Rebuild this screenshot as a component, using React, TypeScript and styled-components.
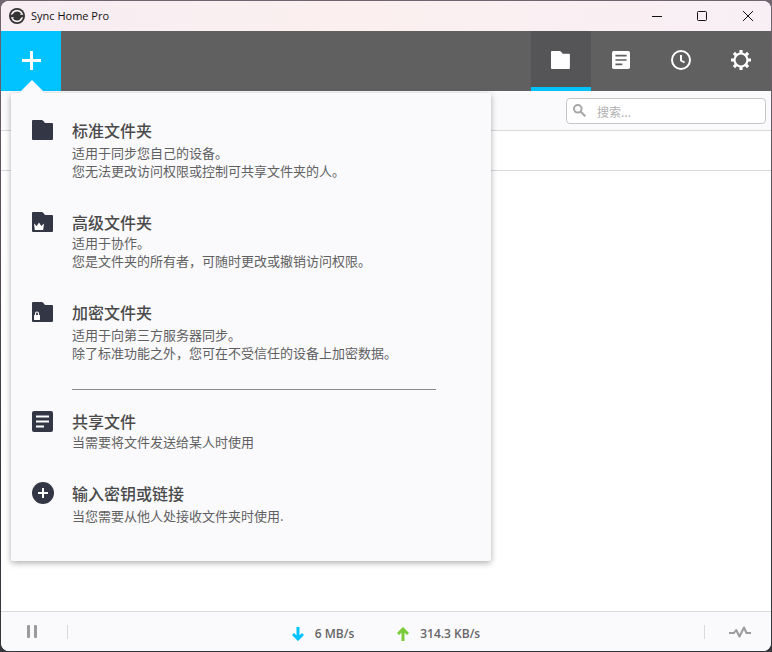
import React from "react";
import styled, { createGlobalStyle } from "styled-components";

const latin = '"Open Sans", "Noto Sans", sans-serif';
const chinese = '"Noto Sans CJK SC", "Open Sans", sans-serif';

const color = {
  accent: "#00c3ff",
  bar: "#606060",
  barActive: "#555558",
  surface: "#fafafd",
  line: "#d9d9dc",
  ink: "#333745",
  title: "#4a4a4a",
  text: "#606060",
  muted: "#9b9b9b",
  up: "#7ccb3a",
};

const GlobalStyle = createGlobalStyle`
  * { box-sizing: border-box; }
  body {
    margin: 0;
    background: linear-gradient(180deg, #716670 0%, #554b54 40%, #38393f 70%, #35363c 100%);
  }
  button {
    margin: 0;
    padding: 0;
    border: 0;
    background: none;
    font: inherit;
    color: inherit;
  }
  svg { display: block; }
`;

const Desktop = styled.div`
  display: flex;
  height: 100vh;
  padding: 1px;
`;

const Window = styled.div`
  position: relative;
  flex: 1;
  display: flex;
  flex-direction: column;
  overflow: hidden;
  border-radius: 8px;
  background: #fff;
  font-family: ${latin};
`;

const TitleBar = styled.header`
  flex: none;
  display: flex;
  align-items: center;
  height: 30px;
  padding-left: 8px;
  background: linear-gradient(90deg, #f7edf3, #fbefef 45%, #f8eff5);
`;

const AppName = styled.h1`
  flex: 1;
  margin: 0;
  padding-left: 6px;
  font-size: 11px;
  font-weight: 400;
  line-height: 16px;
  color: #111;
`;

const CaptionButton = styled.button`
  display: grid;
  place-items: center;
  width: 46px;
  height: 30px;
`;

const Toolbar = styled.nav`
  flex: none;
  display: flex;
  height: 60px;
  background: ${color.bar};
  color: #fff;
`;

const AddButton = styled.button`
  display: grid;
  place-items: center;
  width: 60px;
  margin-right: auto;
  background: ${color.accent};
`;

const TabButton = styled.button<{ $active?: boolean }>`
  display: grid;
  place-items: center;
  width: 60px;
  padding-bottom: 2px;
  background: ${(p) => (p.$active ? color.barActive : "transparent")};
  box-shadow: ${(p) => (p.$active ? `inset 0 -4px ${color.accent}` : "none")};
`;

const SearchBand = styled.div`
  flex: none;
  display: flex;
  justify-content: flex-end;
  align-items: center;
  height: 40px;
  padding-right: 5px;
  border-bottom: 1px solid ${color.line};
  background: ${color.surface};
`;

const SearchField = styled.label`
  display: flex;
  align-items: center;
  gap: 11px;
  width: 200px;
  height: 26px;
  padding-left: 6px;
  border: 1px solid #c6c6c9;
  border-radius: 4px;
  background: #fff;
`;

const SearchInput = styled.input`
  flex: 1;
  min-width: 0;
  padding: 2px 0 0;
  border: 0;
  outline: 0;
  background: none;
  font-family: ${chinese};
  font-size: 12px;
  line-height: 20px;
  &::placeholder { color: #b0b0b0; opacity: 1; }
`;

const ListHeader = styled.div`
  flex: none;
  height: 40px;
  border-bottom: 1px solid ${color.line};
`;

const FolderList = styled.main`
  flex: 1;
`;

const StatusBar = styled.footer`
  flex: none;
  display: flex;
  align-items: center;
  justify-content: space-between;
  height: 40px;
  border-top: 1px solid ${color.line};
  background: ${color.surface};
`;

const StatusButton = styled.button<{ $side: "left" | "right" }>`
  display: grid;
  place-items: center;
  width: 67px;
  height: 14px;
  color: ${color.muted};
  ${(p) =>
    p.$side === "left"
      ? `border-right: 1px solid ${color.line}; padding-right: 4px;`
      : `border-left: 1px solid ${color.line}; padding-left: 4px;`}
`;

const Speeds = styled.div`
  display: flex;
  gap: 43px;
  padding-top: 4px;
`;

const Speed = styled.span`
  display: flex;
  align-items: center;
  gap: 11px;
  font-size: 12px;
  font-weight: 600;
  line-height: 16px;
  color: #666;
`;

const AddMenu = styled.section`
  position: absolute;
  top: 92px;
  left: 10px;
  width: 480px;
  padding: 25px 55px 36px 21px;
  border-radius: 2px;
  background: ${color.surface};
  box-shadow: 0 2px 6px rgba(0, 0, 0, 0.32);
`;

const Pointer = styled.svg`
  position: absolute;
  top: -13px;
  left: 9px;
`;

const MenuItem = styled.button`
  display: grid;
  grid-template-columns: 40px 1fr;
  width: 100%;
  margin-bottom: 30px;
  font-family: ${chinese};
  text-align: left;
  &:last-child { margin-bottom: 0; }
`;

const ItemIcon = styled.span`
  display: flex;
  align-items: center;
  height: 24px;
  color: ${color.ink};
`;

const ItemText = styled.span<{ $loose?: boolean }>`
  display: flex;
  flex-direction: column;
  gap: ${(p) => (p.$loose ? 2 : 0)}px;
`;

const ItemTitle = styled.strong`
  font-size: 16px;
  font-weight: 500;
  line-height: 24px;
  color: ${color.title};
`;

const ItemNote = styled.span`
  font-size: 13px;
  line-height: 18px;
  color: ${color.text};
  white-space: pre-line;
`;

const Divider = styled.hr`
  height: 1px;
  margin: -3px 0 19px 40px;
  border: 0;
  background: #88888b;
`;

const FolderShape = ({
  width = 21,
  height = 20,
  children,
}: {
  width?: number;
  height?: number;
  children?: React.ReactNode;
}) => (
  <svg width={width} height={height} viewBox="0 0 21 20" preserveAspectRatio="xMinYMid meet" aria-hidden="true">
    <path
      d="M1 0h8.600c.6 0 1 .2 1.400.6L13 3h7a1 1 0 0 1 1 1v15a1 1 0 0 1-1 1H1a1 1 0 0 1-1-1V1a1 1 0 0 1 1-1z"
      fill="currentColor"
    />
    {children}
  </svg>
);

const Crown = () => <path d="M2 11.500l2.700 2.500L7 10.500 9.300 14l2.700-2.500-.8 6.500H2.800z" fill="#fff" />;

const Lock = () => (
  <>
    <rect x="2" y="13" width="6" height="5" rx=".5" fill="#fff" />
    <path d="M3.500 13.500v-1.800a1.500 1.700 0 0 1 3 0v1.800" fill="none" stroke="#fff" strokeWidth="1.200" />
  </>
);

const DocShape = ({ size, lines }: { size: number; lines: string }) => (
  <svg width={size} height={size} viewBox="0 0 21 21" aria-hidden="true">
    <rect width="21" height="21" rx="2" fill="currentColor" />
    <path d="M4 5.500h13M4 10.500h13M4 15.500h8" stroke={lines} strokeWidth="2" />
  </svg>
);

const PlusDisc = () => (
  <svg width="22" height="22" viewBox="0 0 22 22" aria-hidden="true">
    <circle cx="11" cy="11" r="11" fill="currentColor" />
    <path d="M6 11h10M11 6v10" stroke="#fff" strokeWidth="2" />
  </svg>
);

const Logo = () => (
  <svg width="16" height="16" viewBox="0 0 16 16" aria-hidden="true">
    <circle cx="8" cy="8" r="8" fill="#333" />
    <circle cx="8" cy="8" r="6.200" fill="#f7edf3" />
    <path d="M3.800 6.200A4.700 4.700 0 0 1 12 5.600l-1.200 1.200h3.700v2.100l-2.200.6A4.700 4.700 0 0 1 4 10.400l1.200-1.200H1.500V7.100z" fill="#333" />
  </svg>
);

const Clock = () => (
  <svg width="20" height="20" viewBox="0 0 20 20" fill="none" stroke="currentColor" strokeWidth="2" aria-hidden="true">
    <circle cx="10" cy="10" r="9" />
    <path d="M10 5v5.500l3.500 2" />
  </svg>
);

const Gear = () => (
  <svg width="20" height="20" viewBox="-10 -10 20 20" fill="none" stroke="currentColor" aria-hidden="true">
    <circle r="6.500" strokeWidth="2.200" />
    {[0, 45, 90, 135].map((angle) => (
      <path key={angle} d="M0-10v3M0 10v-3" strokeWidth="3.200" transform={`rotate(${angle})`} />
    ))}
  </svg>
);

const SpeedArrow = ({ up }: { up?: boolean }) => (
  <svg width="12" height="14" viewBox="0 0 12 14" fill="none" stroke={up ? color.up : color.accent} strokeWidth="3" aria-hidden="true">
    <path d={up ? "M6 14V2M1 7l5-5 5 5" : "M6 0v12M1 7l5 5 5-5"} />
  </svg>
);

type Entry = { icon: React.ReactNode; title: string; note: string; loose?: boolean };

const folderItems: Entry[] = [
  { icon: <FolderShape />, title: "标准文件夹", note: "适用于同步您自己的设备。\n您无法更改访问权限或控制可共享文件夹的人。", loose: true },
  { icon: <FolderShape><Crown /></FolderShape>, title: "高级文件夹", note: "适用于协作。\n您是文件夹的所有者，可随时更改或撤销访问权限。" },
  { icon: <FolderShape><Lock /></FolderShape>, title: "加密文件夹", note: "适用于向第三方服务器同步。\n除了标准功能之外，您可在不受信任的设备上加密数据。", loose: true },
];

const shareItems: Entry[] = [
  { icon: <DocShape size={21} lines="#fff" />, title: "共享文件", note: "当需要将文件发送给某人时使用" },
  { icon: <PlusDisc />, title: "输入密钥或链接", note: "当您需要从他人处接收文件夹时使用.", loose: true },
];

const Item = ({ icon, title, note, loose }: Entry) => (
  <MenuItem type="button">
    <ItemIcon>{icon}</ItemIcon>
    <ItemText $loose={loose}>
      <ItemTitle>{title}</ItemTitle>
      <ItemNote>{note}</ItemNote>
    </ItemText>
  </MenuItem>
);

export default function App() {
  return (
    <Desktop>
      <GlobalStyle />
      <Window>
        <TitleBar>
          <Logo />
          <AppName>Sync Home Pro</AppName>
          <CaptionButton type="button" aria-label="最小化">
            <svg width="12" height="11" stroke="#111"><path d="M2 5.500h10" /></svg>
          </CaptionButton>
          <CaptionButton type="button" aria-label="最大化">
            <svg width="10" height="10" fill="none" stroke="#111"><rect x=".5" y=".5" width="9" height="9" rx="1" /></svg>
          </CaptionButton>
          <CaptionButton type="button" aria-label="关闭">
            <svg width="10" height="10" stroke="#111"><path d="M0 0l10 10M10 0L0 10" /></svg>
          </CaptionButton>
        </TitleBar>

        <Toolbar>
          <AddButton type="button" aria-label="添加">
            <svg width="20" height="20" stroke="currentColor" strokeWidth="3"><path d="M1 9.500h19M10.500 0v19" /></svg>
          </AddButton>
          <TabButton type="button" aria-label="文件夹" $active><FolderShape width={20} height={18} /></TabButton>
          <TabButton type="button" aria-label="文件"><DocShape size={18} lines={color.bar} /></TabButton>
          <TabButton type="button" aria-label="历史"><Clock /></TabButton>
          <TabButton type="button" aria-label="设置"><Gear /></TabButton>
        </Toolbar>

        <SearchBand>
          <SearchField>
            <svg width="13" height="13" viewBox="0 0 13 13" fill="none" stroke="#a6a6a6" strokeWidth="2" aria-hidden="true">
              <circle cx="4.800" cy="4.800" r="3.800" />
              <path d="M7.500 7.500l4.800 4.800" />
            </svg>
            <SearchInput type="text" placeholder="搜索..." aria-label="搜索" />
          </SearchField>
        </SearchBand>
        <ListHeader />
        <FolderList />

        <StatusBar>
          <StatusButton type="button" aria-label="暂停" $side="left">
            <svg width="10" height="13" fill="currentColor"><rect width="3" height="13" rx="1" /><rect x="7" width="3" height="13" rx="1" /></svg>
          </StatusButton>
          <Speeds>
            <Speed><SpeedArrow />6 MB/s</Speed>
            <Speed><SpeedArrow up />314.3 KB/s</Speed>
          </Speeds>
          <StatusButton type="button" aria-label="活动" $side="right">
            <svg width="22" height="12" viewBox="0 0 22 12" fill="none" stroke="currentColor" strokeWidth="2" strokeLinejoin="round">
              <path d="M0 7h5l2.200-3L10.500 10.500 15 1.500 17.500 7H22" />
            </svg>
          </StatusButton>
        </StatusBar>

        <AddMenu aria-label="添加">
          <Pointer width="24" height="13" viewBox="0 0 24 13" aria-hidden="true">
            <path d="M12 0l11 11v2H1v-2z" fill={color.surface} />
          </Pointer>
          {folderItems.map((entry) => <Item key={entry.title} {...entry} />)}
          <Divider />
          {shareItems.map((entry) => <Item key={entry.title} {...entry} />)}
        </AddMenu>
      </Window>
    </Desktop>
  );
}
